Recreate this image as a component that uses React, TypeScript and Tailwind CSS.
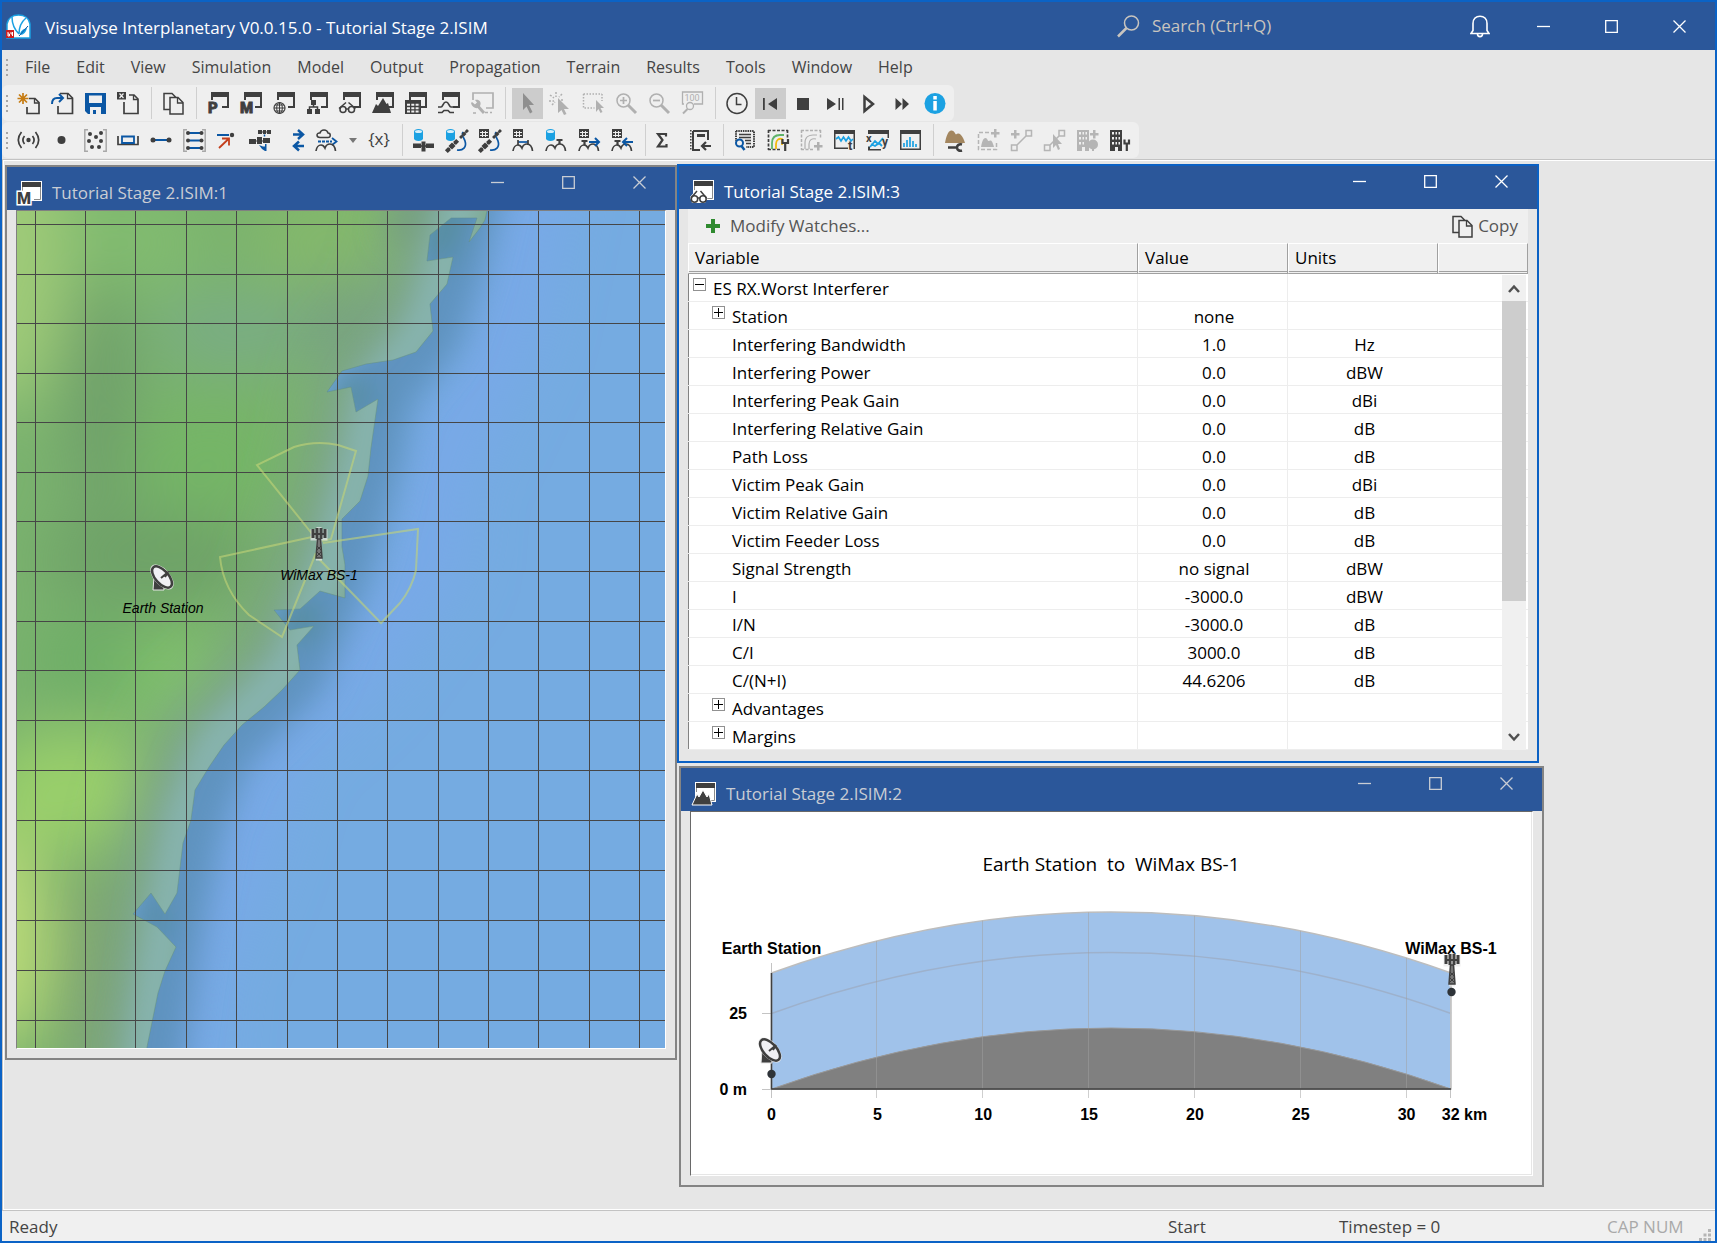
import React from 'react';

type IconProps = { children: React.ReactNode; className?: string };

// every toolbar glyph is drawn on the same 23px canvas
function Icon({ children, className = "text-[#3f3f3f]" }: IconProps) {
    return (
        <svg
            width="23"
            height="23"
            viewBox="0 0 23 23"
            fill="none"
            stroke="none"
            aria-hidden="true"
            className={"shrink-0 overflow-visible " + className}
        >
            {children}
        </svg>
    );
}

const BLUE = "#0b57a4";
const CYAN = "#1ba1e2";

const WinFrame = () => <path fill="currentColor" d="M4 0h18v16h-7v-2h5V5h-14v3H4z" />;
const Disk = ({ x = 0, y = 0 }) => (
    <g transform={`translate(${x} ${y})`}>
        <path fill={CYAN} d="M0 2.500C0 1 2 0 4.500 0S9 1 9 2.500v7C9 11 7 12 4.500 12S0 11 0 9.500z" />
        <ellipse cx="4.500" cy="2.500" rx="3.500" ry="1.500" fill="#d6effb" />
    </g>
);
const MiniGrid = ({ x = 0, y = 0 }) => (
    <g transform={`translate(${x} ${y})`}>
        <path fill="currentColor" d="M0 0h10v9H0z" />
        <path stroke="#efefef" d="M1 3.500h8M1 6.500h8M3.500 2v6M6.500 2v6" />
    </g>
);
const Hills = () => <path stroke="currentColor" strokeWidth="1.700" d="M1 22c.5-4 3-6 5-6 2 0 3 1 4 3 1-3 3-4 5-4 3 0 5 3 5.500 7" />;
const SmallSat = ({ x = 0, y = 0, s = 1 }) => (
    <g transform={`translate(${x} ${y}) rotate(-45) scale(${s})`}>
        <path fill="currentColor" d="M-8-2h4.500v4h-4.500zM-2.500-2.500h5v5h-5zM3.500-2h4.500v4h-4.500z" />
        <path stroke="currentColor" d="M-7 0h14" />
    </g>
);
const Orbit = () => (
    <>
        <path stroke={BLUE} strokeWidth="1.700" d="M17 3c-2 3 1 6 2 9 2 6-2 10-8 9" />
        <SmallSat x={18} y={5} s={0.7} />
        <SmallSat x={6} y={17} />
    </>
);
const Plus = ({ x = 0, y = 0 }) => <path fill="currentColor" d={`M${x + 3} ${y}h2.500v3h3v2.500h-3v3h-2.500v-3h-3v-2.500h3z`} />;

const icons: Record<string, React.ReactNode> = {
    newFile: (
        <Icon>
            <path stroke="currentColor" strokeWidth="1.700" d="M11 6.500h6l4 4V21.500H9V15" />
            <path stroke="currentColor" strokeWidth="1.300" d="M16.500 7v4H21" />
            <path stroke="#c67c13" strokeWidth="1.700" d="M5 1v11M-.5 6.500h11M1 2.500l8 8M9 2.500l-8 8" />
        </Icon>
    ),
    open: (
        <Icon>
            <path stroke="currentColor" strokeWidth="1.700" d="M9 1.500h8l4.500 4.500v15.500H7V14" />
            <path stroke="currentColor" strokeWidth="1.300" d="M16.500 1.500v5h5" />
            <path stroke={BLUE} strokeWidth="2" d="M1 12c0-4 2-6 5-6h5M8 2l4 4-4 4" />
        </Icon>
    ),
    save: (
        <Icon>
            <path fill={BLUE} fillRule="evenodd" d="M1 1h21v21H4l-3-3zM5 3.500v7.500h13V3.500zM6 15v7h3v-4h3v4h5v-7z" />
        </Icon>
    ),
    closeFile: (
        <Icon>
            <path stroke="currentColor" strokeWidth="1.700" d="M12 3h5l4 4v14.500H7V10" />
            <path stroke="currentColor" strokeWidth="1.300" d="M16.500 3v4.500H21" />
            <path fill="currentColor" d="M0 0h9v7.500H0z" />
            <path stroke="#efefef" strokeWidth="1.200" d="M2.500 1.500l4 4.500M6.500 1.500l-4 4.500" />
        </Icon>
    ),
    copy: (
        <Icon>
            <path stroke="currentColor" strokeWidth="1.500" d="M8 17.500H2V1.500h8l4 4M8 5.500h8l5 5V22H8z" />
            <path stroke="currentColor" strokeWidth="1.300" d="M15.500 6v5H21" />
        </Icon>
    ),
    plot: (
        <Icon>
            <WinFrame />
            <text x="1" y="21" fontSize="15" fontWeight="900" fontFamily="Roboto, sans-serif" fill="currentColor" stroke="currentColor" strokeWidth=".8">P</text>
        </Icon>
    ),
    map: (
        <Icon>
            <WinFrame />
            <text x="0" y="21" fontSize="15" fontWeight="900" fontFamily="Roboto, sans-serif" fill="currentColor" stroke="currentColor" strokeWidth=".8">M</text>
        </Icon>
    ),
    globe: (
        <Icon>
            <WinFrame />
            <circle cx="6.500" cy="16" r="5.500" stroke="currentColor" strokeWidth="1.200" fill="#efefef" />
            <path stroke="currentColor" d="M1 16h11M6.500 10.500v11M2 13h9M2 19h9" />
            <ellipse cx="6.500" cy="16" rx="2.800" ry="5.500" stroke="currentColor" />
        </Icon>
    ),
    tree: (
        <Icon>
            <WinFrame />
            <path fill="currentColor" d="M5 8h5v5H5zM1 17h5v5H1zM9 17h5v5H9z" />
            <path stroke="currentColor" strokeWidth="1.500" d="M7.500 12v3M3.500 18v-3h8v3" />
        </Icon>
    ),
    watch: (
        <Icon>
            <WinFrame />
            <circle cx="4" cy="17.500" r="3" stroke="currentColor" strokeWidth="1.500" />
            <circle cx="12.500" cy="17.500" r="3" stroke="currentColor" strokeWidth="1.500" />
            <path stroke="currentColor" strokeWidth="1.500" d="M7 17h2.500M0 16.500l7-6M16.500 16.500l-7-6" />
        </Icon>
    ),
    terrainView: (
        <Icon>
            <WinFrame />
            <path fill="currentColor" d="M0 21l4-9 2 2 5-8 3.500 6 1.500-1 3 10z" />
        </Icon>
    ),
    table: (
        <Icon>
            <WinFrame />
            <path fill="currentColor" d="M0 8h16v14H0z" />
            <path stroke="#efefef" strokeWidth="2" d="M2 12.800h13M2 16.200h13M2 19.600h13" strokeDasharray="3 1.300" />
        </Icon>
    ),
    graph: (
        <Icon>
            <WinFrame />
            <path stroke="currentColor" strokeWidth="1.700" d="M0 15h3c2 0 2-5 5-5s3 5 5 5h2M0 20.500h4l2-2h4l2 2h4" />
        </Icon>
    ),
    configure: (
        <Icon className="text-[#b0b0b0]">
            <path stroke="currentColor" strokeWidth="1.700" d="M2 8V1h20v15h-7M14 20.500h3M19 20.500h2M2 21h3" />
            <path stroke="currentColor" strokeWidth="3" d="M5 12l8 9" />
            <path fill="currentColor" d="M0 11l1-1 3 2.500 2-2L4 8c4-1 7 2 5 6s-8 2-9-3z" />
        </Icon>
    ),
    cursor: (
        <Icon className="text-[#8f8f8f]">
            <path fill="currentColor" d="M7 1l11 12h-5l3.500 7-2.500 1.500-3.500-7L7 18z" />
        </Icon>
    ),
    cursorClick: (
        <Icon className="text-[#b0b0b0]">
            <path fill="currentColor" d="M9 6l11 11h-5l2.500 5-2.500 1-2.500-5L9 21z" />
            <path stroke="currentColor" strokeWidth="1.500" strokeDasharray="2 1.500" d="M7 0v5M1 3l4 3M13 2l-3 3M0 9h5M12 8h3M3 13l3-3" />
        </Icon>
    ),
    cursorBox: (
        <Icon className="text-[#b0b0b0]">
            <path stroke="currentColor" strokeWidth="1.500" strokeDasharray="1.500 1.500" d="M1.500 2h18.500M1.500 2v14h11M20 2v7" />
            <path fill="currentColor" d="M14 8l8 8h-3.500l2 4-2 1-2-4-2.500 3z" />
        </Icon>
    ),
    zoomIn: (
        <Icon className="text-[#b0b0b0]">
            <circle cx="8.500" cy="8.500" r="6.500" stroke="currentColor" strokeWidth="1.500" />
            <path stroke="currentColor" strokeWidth="1.700" d="M8.500 5v7M5 8.500h7" />
            <path stroke="currentColor" strokeWidth="3" d="M13 13l8 8" />
        </Icon>
    ),
    zoomOut: (
        <Icon className="text-[#b0b0b0]">
            <circle cx="8.500" cy="8.500" r="6.500" stroke="currentColor" strokeWidth="1.500" />
            <path stroke="currentColor" strokeWidth="1.700" d="M5 8.500h7" />
            <path stroke="currentColor" strokeWidth="3" d="M13 13l8 8" />
        </Icon>
    ),
    zoomScale: (
        <Icon className="text-[#b0b0b0]">
            <path stroke="currentColor" strokeWidth="1.300" d="M3 12H1.500V0h20v12H13" />
            <text x="3.500" y="9" fontSize="9" fontFamily="Roboto, sans-serif" fill="currentColor">100</text>
            <circle cx="9" cy="14" r="3.500" stroke="currentColor" strokeWidth="1.300" />
            <path stroke="currentColor" strokeWidth="2" d="M6.500 17L2 21.500" />
        </Icon>
    ),
    clock: (
        <Icon>
            <circle cx="11" cy="11.500" r="10" stroke="currentColor" strokeWidth="1.500" />
            <path stroke="currentColor" strokeWidth="1.500" d="M10.500 5v7.500h5" />
        </Icon>
    ),
    rewind: (
        <Icon>
            <path fill="currentColor" d="M4 6h1.800v12H4zM18 6v12l-9-6z" />
        </Icon>
    ),
    stop: (
        <Icon>
            <path fill="currentColor" d="M5 6h12v12H5z" />
        </Icon>
    ),
    step: (
        <Icon>
            <path fill="currentColor" d="M2 6l9 6-9 6zM13.500 6H15v12h-1.500zM17 6h1.500v12H17z" />
        </Icon>
    ),
    play: (
        <Icon>
            <path stroke="currentColor" strokeWidth="2.500" d="M6.500 5l8.500 7-8.500 7z" />
        </Icon>
    ),
    fast: (
        <Icon>
            <path fill="currentColor" d="M4.500 6l6.500 6-6.500 6zM11.500 6l6.500 6-6.500 6z" />
        </Icon>
    ),
    info: (
        <Icon>
            <circle cx="11" cy="11.500" r="10.500" fill={CYAN} />
            <path fill="#fff" d="M9.300 9h3.500v9.500H9.300zM9.300 4h3.500v3.500H9.300z" />
        </Icon>
    ),
    antenna: (
        <Icon>
            <circle cx="10.500" cy="11" r="2.200" fill="currentColor" />
            <path stroke="currentColor" strokeWidth="1.700" d="M6.500 7c-2 2.500-2 5.500 0 8M14.500 7c2 2.500 2 5.500 0 8M3.500 3c-4 5-4 11 0 16M17.500 3c4 5 4 11 0 16" />
        </Icon>
    ),
    dot: (
        <Icon>
            <circle cx="10.500" cy="11" r="4" fill="currentColor" />
        </Icon>
    ),
    group: (
        <Icon>
            <path stroke="#a8a8a8" strokeWidth="1.500" d="M4 .8H.8v21.400H4M19 .8h3.200v21.400H19" />
            <g fill="currentColor">
                <circle cx="6" cy="5" r="2" /><circle cx="17" cy="4" r="2" /><circle cx="12" cy="8" r="2" />
                <circle cx="5" cy="12" r="2" /><circle cx="17" cy="12" r="2" /><circle cx="8" cy="18" r="2" /><circle cx="15" cy="18" r="2" />
            </g>
        </Icon>
    ),
    carrier: (
        <Icon>
            <path stroke="currentColor" strokeWidth="1.700" d="M1 7v8.500h20V7" />
            <path stroke={BLUE} strokeWidth="1.800" fill="#efefef" d="M5 7.500h12V14H5z" />
        </Icon>
    ),
    link: (
        <Icon>
            <path stroke={BLUE} strokeWidth="2" d="M3 11h16" />
            <circle cx="3" cy="11" r="2.500" fill="currentColor" /><circle cx="19" cy="11" r="2.500" fill="currentColor" />
        </Icon>
    ),
    linkGroup: (
        <Icon>
            <path stroke="#a8a8a8" strokeWidth="1.500" d="M4 .8H.8v21.400H4M19 .8h3.200v21.400H19" />
            <path stroke={BLUE} strokeWidth="2" d="M5 4h14M5 11.500h14M5 19h14" />
            <g fill="currentColor">
                <circle cx="5" cy="4" r="2" /><circle cx="18.500" cy="4" r="2" /><circle cx="5" cy="11.500" r="2" />
                <circle cx="18.500" cy="11.500" r="2" /><circle cx="5" cy="19" r="2" /><circle cx="18.500" cy="19" r="2" />
            </g>
        </Icon>
    ),
    interference: (
        <Icon>
            <path stroke={BLUE} strokeWidth="2" d="M1 6h12" />
            <circle cx="16" cy="6" r="2.200" fill="currentColor" />
            <path stroke="#c43e1c" strokeWidth="1.800" d="M3 19L13 9.500M6 9.500h7v7" />
        </Icon>
    ),
    satellites: (
        <Icon>
            <path fill="currentColor" d="M0 10h7v5H0zM8 8h5v7H8zM14 9h7v5h-7zM9 1h4v4H9zM14 1h3v4h-3zM18 1h4v4h-4z" />
            <path stroke="currentColor" d="M1 12h20M10 3h12" />
            <path stroke={BLUE} strokeWidth="1.500" d="M15.500 5.500v2" />
            <path fill={BLUE} d="M10 16l4 1.500h2V15h1.500v7H16l-3-2z" />
        </Icon>
    ),
    swap: (
        <Icon>
            <path stroke={BLUE} strokeWidth="2.500" d="M11 5.500h9M16 1l5 4.500-5 4.500M22 17h-9M17 12.500l-5 4.500 5 4.500" />
        </Icon>
    ),
    propagationEnv: (
        <Icon>
            <path stroke="currentColor" strokeWidth="1.500" d="M5 8.500c-4 0-4-5 0-4.500 1-4 7-4 8 0 3 0 3 4.500 0 4.500z" />
            <path stroke={BLUE} strokeWidth="2" strokeDasharray="3 1" d="M3 12.500h14" />
            <path stroke={BLUE} strokeWidth="1.800" d="M17 9l4.500 3.500L17 16" />
            <Hills />
        </Icon>
    ),
    variable: (
        <Icon>
            <text x="11" y="16" textAnchor="middle" fontSize="17" fontFamily="Open Sans, sans-serif" fill="currentColor">{"{x}"}</text>
        </Icon>
    ),
    diskSat: (
        <Icon>
            <Disk x={1} />
            <path fill="currentColor" d="M0 14.500h8v4.500H0zM13 14.500h8v4.500h-8zM8.500 12.500h4v10h-4z" />
            <path stroke="currentColor" strokeWidth="1.700" d="M1 17h20" />
        </Icon>
    ),
    diskOrbit: (
        <Icon>
            <Disk /><Orbit />
        </Icon>
    ),
    gridOrbit: (
        <Icon>
            <MiniGrid /><Orbit />
        </Icon>
    ),
    gridHills: (
        <Icon>
            <MiniGrid x={1} /><Hills />
            <path stroke={BLUE} strokeWidth="1.700" d="M6 13h10" />
            <path stroke="currentColor" strokeWidth="1.700" d="M6 11v5M16 11v5" />
        </Icon>
    ),
    diskHills: (
        <Icon>
            <Disk x={1} /><Hills />
            <path stroke="currentColor" strokeWidth="2.200" d="M11.500 11h6M14.500 11v4" />
        </Icon>
    ),
    gridOut: (
        <Icon>
            <MiniGrid x={1} /><Hills />
            <path stroke="currentColor" strokeWidth="2.200" d="M3.500 12h6M6.500 12v4" />
            <path stroke={BLUE} strokeWidth="2" d="M11 13h10M17 9l4 4-4 4" />
        </Icon>
    ),
    gridIn: (
        <Icon>
            <MiniGrid x={1} /><Hills />
            <path stroke="currentColor" strokeWidth="2.200" d="M3.500 12h6M6.500 12v4" />
            <path stroke={BLUE} strokeWidth="2" d="M12 13h10M16 9l-4 4 4 4" />
        </Icon>
    ),
    sum: (
        <Icon>
            <path stroke="currentColor" strokeWidth="2.200" d="M10 7.500V5H2l4.500 6L2 17.500h8.500V15" />
        </Icon>
    ),
    journal: (
        <Icon>
            <path stroke="currentColor" strokeWidth="2" d="M4 2h15v9M4 2v19h7" />
            <path stroke="currentColor" strokeWidth="1.500" strokeDasharray="1.500 1.500" d="M1.800 1v20" />
            <path fill="currentColor" d="M8 5h8v3H8z" />
            <path stroke="currentColor" strokeWidth="2.200" d="M13 17h9M17 13l-4 4 4 4" />
        </Icon>
    ),
    report: (
        <Icon>
            <path stroke="currentColor" strokeWidth="2" strokeDasharray="1.500 .8" d="M2 2h18v16h-8M2 2v10" />
            <path stroke="currentColor" strokeWidth="1.500" d="M5 5.500h12M5 8.500h12M11 11.500h6M12 14.500h5" />
            <circle cx="5.500" cy="14" r="3.500" stroke={BLUE} strokeWidth="2" />
            <path stroke={BLUE} strokeWidth="2.500" d="M7.500 17l3 4" />
        </Icon>
    ),
    contour: (
        <Icon>
            <path stroke="currentColor" strokeWidth="1.700" strokeDasharray="3 1.500" d="M1 1.500h20M1.500 1v20M1 20.500h12M20.500 1v8" />
            <path stroke="#5fb36b" strokeWidth="1.800" d="M5 20V14c0-6 4-8 8-8h4" />
            <path stroke="#f2b90f" strokeWidth="1.800" d="M9 20v-5c0-4 3-6 6-5v6" />
            <path stroke="currentColor" strokeWidth="2.200" d="M15.500 10v4h5.500v-4M18.200 13v9" />
        </Icon>
    ),
    contourAdd: (
        <Icon className="text-[#b0b0b0]">
            <path stroke="currentColor" strokeWidth="1.500" strokeDasharray="3 1.500" d="M1 1.500h20M1.500 1v20M1 20.500h12M20.500 1v8" />
            <path stroke="currentColor" strokeWidth="1.200" d="M5 20V14c0-6 4-8 8-8h4M9 20v-5c0-4 3-6 7-5" />
            <Plus x={14} y={13} />
        </Icon>
    ),
    timeGraph: (
        <Icon>
            <path fill="currentColor" fillRule="evenodd" d="M1 1h21v19h-1.500V5h-18v13.500H15V20H1z" />
            <path stroke={CYAN} strokeWidth="1.700" d="M3 10l2.500-2 2.500 4 2.500-4 2.500 4 2.500-4 2.500 4 2-2" />
            <text x="15" y="21" fontSize="13" fontWeight="700" fontFamily="Roboto, sans-serif" fill="currentColor">t</text>
        </Icon>
    ),
    xyGraph: (
        <Icon>
            <path fill="currentColor" d="M2 1h21v8h-1.500V5H2zM2 17.500h2V20h11v1.500H2z" />
            <path stroke={CYAN} strokeWidth="1.800" d="M4 18l5-6 3 3 5-6M5 15l4 2 4-3 3 3" />
            <text x="0" y="13" fontSize="11" fontWeight="700" fontFamily="Roboto, sans-serif" fill="currentColor">x</text>
            <text x="16" y="17" fontSize="12" fontWeight="700" fontFamily="Roboto, sans-serif" fill="currentColor">y</text>
        </Icon>
    ),
    histogram: (
        <Icon>
            <path fill="currentColor" fillRule="evenodd" d="M1 1h21v20H1zM2.500 5v14.500h18V5z" />
            <path stroke={CYAN} strokeWidth="1.700" d="M5 18v-4M8 18v-7M11 18V8M14 18v-6M17 18v-3" />
        </Icon>
    ),
    terrainTool: (
        <Icon>
            <path fill="#a3865f" d="M1 14C2 8 4 2 7 1.500c3-.5 4 3 5 4 1-1 3-1.500 4.500 0 2 2 4 6 4.500 8.500z" />
            <path stroke="currentColor" strokeWidth="2.500" d="M4 18.500h9M18 15.500c-3-1-5 1-5 3s2 4 5 3" />
        </Icon>
    ),
    terrainAdd: (
        <Icon className="text-[#b5b5b5]">
            <path stroke="currentColor" strokeWidth="1.500" strokeDasharray="4 2" d="M12 3.500H1.500v17h18V12" />
            <path fill="currentColor" d="M4 18c1-5 2-9 4.500-9 2 0 2 3 3 3s2-1 3 0 2 4 2.500 6z" />
            <Plus x={14} y={0} />
        </Icon>
    ),
    pathAdd: (
        <Icon className="text-[#b5b5b5]">
            <Plus x={1} y={1} />
            <path stroke="currentColor" strokeWidth="1.500" d="M16 1.500h5.500V7H16zM1.500 16H7v5.500H1.500zM7 16l9-9" />
        </Icon>
    ),
    pathSelect: (
        <Icon className="text-[#b5b5b5]">
            <path stroke="currentColor" strokeWidth="1.500" d="M16 1.500h5.500V7H16zM1.500 16H7v5.500H1.500zM7 16l9-9" />
            <path fill="currentColor" d="M10 5l9 10h-4l2 5-2 1-2-5-3 3z" />
        </Icon>
    ),
    buildingAdd: (
        <Icon className="text-[#b5b5b5]">
            <path fill="currentColor" fillRule="evenodd" d="M1 1h12v21H9v-4H6v4H1zM3 3v2.500h2V3zM6.500 3v2.500h1.500V3zM9.500 3v2.500H11V3zM3 8v2.500h2V8zM6.500 8v2.500h1.500V8zM9.500 8v2.500H11V8zM3 13v2.500h2V13zM6.500 13v2.500h1.500V13z" />
            <Plus x={14} y={1} />
            <circle cx="17" cy="15.500" r="5" fill="currentColor" /><path fill="currentColor" d="M16 18h2v4h-2z" />
        </Icon>
    ),
    buildingTool: (
        <Icon>
            <path fill="currentColor" fillRule="evenodd" d="M1 1h12v21H9v-4H6v4H1zM3 3v2.500h2V3zM6.500 3v2.500h1.500V3zM9.500 3v2.500H11V3zM3 8v2.500h2V8zM6.500 8v2.500h1.500V8zM9.500 8v2.500H11V8zM3 13v2.500h2V13zM6.500 13v2.500h1.500V13zM9.500 13v2.500H11V13z" />
            <path stroke="currentColor" strokeWidth="2.200" d="M15.500 10.500v4H20v-4M17.800 14v8" />
        </Icon>
    ),
};

// "|" is a separator, "v" the drop-down arrow
const mainTools = [
    "newFile", "open", "save", "closeFile", "|", "copy", "|",
    "plot", "map", "globe", "tree", "watch", "terrainView", "table", "graph", "configure", "|",
    "cursor", "cursorClick", "cursorBox", "zoomIn", "zoomOut", "zoomScale", "|",
    "clock", "rewind", "stop", "step", "play", "fast", "info",
];
const modelTools = [
    "antenna", "dot", "group", "carrier", "link", "linkGroup", "interference", "satellites", "swap", "propagationEnv", "v", "variable", "|",
    "diskSat", "diskOrbit", "gridOrbit", "gridHills", "diskHills", "gridOut", "gridIn", "|",
    "sum", "journal", "|",
    "report", "contour", "contourAdd", "timeGraph", "xyGraph", "histogram", "|",
    "terrainTool", "terrainAdd", "pathAdd", "pathSelect", "buildingAdd", "buildingTool",
];
const pressed = ["cursor", "rewind"];

const menus = ["File", "Edit", "View", "Simulation", "Model", "Output", "Propagation", "Terrain", "Results", "Tools", "Window", "Help"];

function Grip() {
    return (
        <svg width="3" height="17" viewBox="0 0 3 17" aria-hidden="true" className="shrink-0">
            <path stroke="#a6a6a6" strokeWidth="2" strokeDasharray="2 3" d="M1 0v17" />
        </svg>
    );
}

function Toolbar({ label, tools }: { label: string; tools: string[] }) {
    return (
        <div role="toolbar" aria-label={label} className="flex items-center self-start h-9 gap-0.5 pl-1 pr-[3px] rounded-md bg-[#efefef]">
            <div className="w-1.5"><Grip /></div>
            {tools.map((tool, i) => {
                if (tool === "|") return <div key={i} className="flex justify-center w-2.5 h-8"><div className="w-px bg-[#cfcfcf]"></div></div>;
                if (tool === "v") return (
                    <button key={i} aria-label="more" className="flex items-center justify-center w-[18px] h-[31px]">
                        <svg width="8" height="5" viewBox="0 0 8 5" aria-hidden="true"><path fill="#777" d="M0 0h8L4 5z" /></svg>
                    </button>
                );
                return (
                    <button
                        key={i}
                        aria-label={tool}
                        className={"flex items-center justify-center w-[31px] h-[31px] " + (pressed.includes(tool) ? "bg-[#cccccc]" : "")}
                    >
                        {icons[tool]}
                    </button>
                );
            })}
        </div>
    );
}

function CaptionIcon({ kind }: { kind: "min" | "max" | "close" }) {
    return (
        <svg width="13" height="13" viewBox="0 0 13 13" fill="none" stroke="currentColor" strokeWidth="1.300" aria-hidden="true">
            {kind === "min" && <path d="M0 6.500h13" />}
            {kind === "max" && <path d="M.7.7h11.600v11.600H.7z" />}
            {kind === "close" && <path d="M.5.5l12 12M12.500.5l-12 12" />}
        </svg>
    );
}

type WindowProps = { title: string; icon: React.ReactNode; active?: boolean; className: string; children: React.ReactNode };

function ChildWindow({ title, icon, active, className, children }: WindowProps) {
    return (
        <section className={"absolute flex flex-col border-2 bg-[#e6e6e6] " + (active ? "border-[#0b61c4] " : "border-[#848484] ") + className}>
            <header className={"flex justify-between h-[43px] shrink-0 bg-[#2b579a] " + (active ? "text-white" : "text-[#c9cdd4]")}>
                <div className="flex items-center gap-2.5 pl-[11px] pt-2">
                    {icon}
                    <h2 className="text-[17px]">{title}</h2>
                </div>
                <div className="flex h-[30px]">
                    <button aria-label="Minimize" className="flex items-center justify-center w-[71px]"><CaptionIcon kind="min" /></button>
                    <button aria-label="Maximize" className="flex items-center justify-center w-[71px]"><CaptionIcon kind="max" /></button>
                    <button aria-label="Close" className="flex items-center justify-center w-[71px]"><CaptionIcon kind="close" /></button>
                </div>
            </header>
            {children}
        </section>
    );
}

// window glyph of the blue captions, with its white halo
function TitleGlyph({ children }: { children: React.ReactNode }) {
    return (
        <svg width="24" height="24" viewBox="0 0 24 24" fill="none" aria-hidden="true" className="shrink-0 overflow-visible text-[#3f3f3f]">
            <path fill="#fff" d="M3 0h21v20H3z" />
            <path fill="currentColor" d="M4 1h19v5H4z" />
            <path stroke="#8a8a8a" d="M22.500 6v12.500H16M4.500 6v4" />
            {children}
        </svg>
    );
}

function Dish({ x, y }: { x: number; y: number }) {
    return (
        <g transform={`translate(${x} ${y})`}>
            <path fill="#3f3f3f" stroke="#e8e8e8" d="M-8 0h9l1 13h-11z" />
            <ellipse rx="15" ry="8" transform="rotate(48)" fill="#e8e8e8" />
            <ellipse rx="13" ry="6.500" transform="rotate(48)" fill="#f0f0f4" stroke="#3f3f3f" strokeWidth="2.500" />
            <path stroke="#3f3f3f" strokeWidth="2" d="M-1 1l6-5M3 0l3-5" />
        </g>
    );
}

function Mast({ x, y }: { x: number; y: number }) {
    return (
        <g transform={`translate(${x} ${y})`}>
            <path fill="none" stroke="#e8e8e8" strokeWidth="5" d="M0-17V14M-6-15v9h12v-9M-3 14h6" opacity=".7" />
            <path fill="none" stroke="#3f3f3f" strokeWidth="3" d="M-6-15v9M-2-16V-5M2-16V-5M6-15v9" />
            <path stroke="#3f3f3f" strokeWidth="2" d="M-6-10H6" />
            <path fill="#777" stroke="#3f3f3f" strokeWidth="1.500" d="M-1.500-5h3L3 14h-6z" />
            <path stroke="#3f3f3f" d="M-2 2l4 4M2 2l-4 4M-3 13l5-5M3 13l-5-5" />
        </g>
    );
}

const coast =
    "M487 205L487 211 485 220 480 228 469 242 477 218 451 218 430 235 427 261 453 257 447 284 430 304 433 331 416 352 393 360 366 364 342 371 327 392 351 387 356 412 378 399 371 448 368 476 360 501 342 519 342 547 345 565 345 598 320 591 300 609 274 610 290 630 314 626 297 645 300 670 282 690 264 707 242 725 224 745 209 767 195 790 191 820 183 843 177 893 165 914 151 893 133 914 157 927 176 947 165 971 158 993 147 1047 146 1060";
// coastline without its inlets, for the shading on both sides
const shore = "M475 150L450 250 425 330 375 390 365 450 335 560 290 670 215 745 185 820 170 900 160 960 140 1100";

const meridians = [35, 85, 135, 186, 236, 287, 337, 387, 438, 488, 538, 589, 639];
const parallels = [224, 274, 323, 373, 422, 472, 521, 571, 621, 670, 720, 770, 820, 870, 920, 970, 1020];

function MapView() {
    return (
        <svg viewBox="17 211 648 837" preserveAspectRatio="none" className="block w-full h-full" role="img" aria-label="Map">
            <defs>
                <filter id="soft" filterUnits="userSpaceOnUse" x="-100" y="100" width="900" height="1100"><feGaussianBlur stdDeviation="16" /></filter>
                <filter id="wide" filterUnits="userSpaceOnUse" x="-100" y="100" width="900" height="1100"><feGaussianBlur stdDeviation="30" /></filter>
                <clipPath id="land"><path d={coast + "L0 1060 0 205z"} /></clipPath>
            </defs>
            <rect x="0" y="200" width="700" height="870" fill="#75abe1" />
            <g fill="none" filter="url(#wide)">
                <path d="M540 150L505 330 435 480 430 560 350 670 270 740 235 860 190 970 180 1100" stroke="#79a8ea" strokeWidth="50" />
            </g>
            <g fill="none" filter="url(#soft)">
                <path d={shore} stroke="#5f93bf" strokeWidth="76" />
                <path d="M455 200L430 260M330 390L370 400M275 620L320 620M140 915L165 920" stroke="#548c98" strokeWidth="34" />
            </g>
            <g clipPath="url(#land)">
                <rect x="0" y="200" width="700" height="870" fill="#7ab26e" />
                <g filter="url(#wide)">
                    <ellipse cx="0" cy="250" rx="70" ry="160" fill="#9fca78" />
                    <ellipse cx="130" cy="240" rx="70" ry="60" fill="#81bb70" />
                    <ellipse cx="330" cy="240" rx="80" ry="60" fill="#83b86c" />
                    <ellipse cx="100" cy="400" rx="28" ry="130" fill="#6d9c69" />
                    <ellipse cx="235" cy="330" rx="80" ry="34" fill="#79ac86" />
                    <ellipse cx="345" cy="320" rx="40" ry="40" fill="#769f80" />
                    <ellipse cx="210" cy="460" rx="80" ry="60" fill="#75b566" />
                    <ellipse cx="150" cy="560" rx="110" ry="50" fill="#6ea267" />
                    <ellipse cx="90" cy="660" rx="60" ry="40" fill="#6dae66" />
                    <ellipse cx="180" cy="680" rx="50" ry="50" fill="#80c26a" />
                    <ellipse cx="70" cy="790" rx="90" ry="60" fill="#99cf6a" />
                    <ellipse cx="0" cy="940" rx="50" ry="110" fill="#bada78" />
                    <ellipse cx="95" cy="980" rx="24" ry="130" fill="#7fa06a" />
                </g>
                <g fill="none" filter="url(#wide)">
                    <path d={shore} stroke="#7ba28a" strokeWidth="100" />
                </g>
                <g fill="none" filter="url(#soft)">
                    <path d={shore} stroke="#88b6b4" strokeWidth="40" />
                    <path d="M430 190L400 240" stroke="#769f80" strokeWidth="36" />
                </g>
            </g>
            <path d={coast} fill="none" stroke="#5c8a94" strokeOpacity=".5" />
            <g fill="none" stroke="#464646" shapeRendering="crispEdges">
                {meridians.map((x) => <path key={x} d={`M${x + 0.5} 200v870`} />)}
                {parallels.map((y) => <path key={y} d={`M0 ${y + 0.5}h700`} />)}
            </g>
            <g fill="none" stroke="#c3d477" strokeWidth="2" strokeOpacity=".6">
                <path d="M313 535L257 465 294 447Q316 440 338 445L356 451 331 539 322 541" />
                <path d="M323 543L418 529 416 570Q412 588 400 603L381 623 319 559" />
                <path d="M312 537L220 557Q223 590 249 615L282 637 316 553" />
            </g>
            <Dish x={162} y={577} />
            <Mast x={319} y={544} />
            <g fontSize="14" fontStyle="italic" fontFamily="Liberation Sans, Arial, sans-serif" textAnchor="middle">
                <text x="163" y="613">Earth Station</text>
                <text x="319" y="580">WiMax BS-1</text>
            </g>
        </svg>
    );
}

const rows: { name: string; value?: string; units?: string; toggle?: string; top?: boolean }[] = [
    { name: "ES RX.Worst Interferer", toggle: "-", top: true },
    { name: "Station", value: "none", toggle: "+" },
    { name: "Interfering Bandwidth", value: "1.0", units: "Hz" },
    { name: "Interfering Power", value: "0.0", units: "dBW" },
    { name: "Interfering Peak Gain", value: "0.0", units: "dBi" },
    { name: "Interfering Relative Gain", value: "0.0", units: "dB" },
    { name: "Path Loss", value: "0.0", units: "dB" },
    { name: "Victim Peak Gain", value: "0.0", units: "dBi" },
    { name: "Victim Relative Gain", value: "0.0", units: "dB" },
    { name: "Victim Feeder Loss", value: "0.0", units: "dB" },
    { name: "Signal Strength", value: "no signal", units: "dBW" },
    { name: "I", value: "-3000.0", units: "dBW" },
    { name: "I/N", value: "-3000.0", units: "dB" },
    { name: "C/I", value: "3000.0", units: "dB" },
    { name: "C/(N+I)", value: "44.6206", units: "dB" },
    { name: "Advantages", toggle: "+" },
    { name: "Margins", toggle: "+" },
];

function WatchTable() {
    return (
        <div className="relative">
            <table className="w-full table-fixed border-separate border-spacing-0 text-black">
                <thead>
                    <tr className="*:h-[31px] *:bg-[#f0f0f0] *:border-t *:border-l *:border-t-white *:border-l-white *:border-r *:border-r-[#a0a0a0] *:border-b-[3px] *:border-b-[#a0a0a0] *:[border-bottom-style:double] *:p-0 *:pl-1.5 *:text-left *:font-normal">
                        <th className="w-[450px]">Variable</th>
                        <th className="w-[150px]">Value</th>
                        <th className="w-[150px]">Units</th>
                        <th></th>
                    </tr>
                </thead>
                <tbody className="bg-white">
                    {rows.map((row) => (
                        <tr key={row.name} className="*:h-7 *:border-b *:border-[#ededed] *:p-0">
                            <td className="border-r">
                                <div className={"flex h-[27px] gap-[7px] border-l border-[#828282] " + (row.top ? "pl-1" : "pl-[23px]")}>
                                    {row.toggle ? (
                                        <button aria-label={"Toggle " + row.name} className="flex items-center justify-center w-[13px] h-[13px] mt-1 border border-[#919191]">
                                            <svg width="9" height="9" viewBox="0 0 9 9" stroke="#000" aria-hidden="true">
                                                <path d={row.toggle === "+" ? "M0 4.500h9M4.500 0v9" : "M0 4.500h9"} />
                                            </svg>
                                        </button>
                                    ) : <span className="w-[13px]"></span>}
                                    <span className="pt-[3px]">{row.name}</span>
                                </div>
                            </td>
                            <td className="border-r text-center"><div className="pt-0.5 pl-[3px]">{row.value}</div></td>
                            <td className="text-center"><div className="pt-0.5 pl-[3px]">{row.units}</div></td>
                            <td></td>
                        </tr>
                    ))}
                </tbody>
            </table>
            <div className="absolute right-0.5 top-8 bottom-0 flex flex-col w-6 bg-[#f0f0f0]">
                <button aria-label="Scroll up" className="flex items-center justify-center h-[26px]">
                    <svg width="12" height="9" viewBox="0 0 12 9" fill="none" stroke="#505050" strokeWidth="2.500" aria-hidden="true"><path d="M1 8l5-5.500L11 8" /></svg>
                </button>
                <div className="h-[300px] bg-[#cdcdcd]"></div>
                <div className="grow"></div>
                <button aria-label="Scroll down" className="flex items-center justify-center h-[26px]">
                    <svg width="12" height="9" viewBox="0 0 12 9" fill="none" stroke="#505050" strokeWidth="2.500" aria-hidden="true"><path d="M1 1l5 5.500L11 1" /></svg>
                </button>
            </div>
        </div>
    );
}

const kmTicks = [5, 10, 15, 20, 25, 30];
const kmToX = (km: number) => 771.5 + 21.17 * km;

function PathProfile() {
    return (
        <svg width="840" height="362" viewBox="691 812 840 362" className="block bg-white" role="img" aria-label="Path profile">
            <path fill="#a0c2ea" stroke="#bdbdbd" strokeWidth="1.500" d="M771.500 973Q1111 851 1451 973V1089H771.500z" />
            <path fill="#808080" stroke="#999" d="M771.500 1089Q1111 967 1451 1089z" />
            <path fill="none" stroke="#9db1cc" strokeWidth="1.500" d="M771.500 1013.500Q1111 891.500 1451 1013.500" />
            {kmTicks.map((km) => {
                const t = km / 32.1;
                const x = Math.round(kmToX(km)) - 0.5;
                return <path key={km} stroke="#a0a0a0" strokeOpacity=".5" d={`M${x} ${973 - 244 * t * (1 - t)}V1098`} />;
            })}
            <path stroke="#c4c4c4" d="M771.500 963V1098M1450.500 973V1098M762 1013.500h10M762 1089.500h10" />
            <path stroke="#3f3f3f" strokeWidth="1.500" d="M771.500 973V1089M771 1089H1451" fill="none" />
            <circle cx="771.500" cy="1074" r="4.200" fill="#2e3338" />
            <circle cx="1451.500" cy="992" r="4.200" fill="#2e3338" />
            <g fontSize="16" fontWeight="700" fontFamily="Liberation Sans, Arial, sans-serif" textAnchor="middle">
                <text x="771.500" y="954">Earth Station</text>
                <text x="1451" y="954">WiMax BS-1</text>
                <text x="771.500" y="1120">0</text>
                {kmTicks.map((km) => <text key={km} x={kmToX(km)} y="1120">{km}</text>)}
                <text x="1464.500" y="1120">32 km</text>
                <text x="747" y="1019" textAnchor="end">25</text>
                <text x="747" y="1095" textAnchor="end">0 m</text>
            </g>
            <text x="1111" y="871" fontSize="19" textAnchor="middle" xmlSpace="preserve" style={{ whiteSpace: "pre" }}>Earth Station  to  WiMax BS-1</text>
            <Dish x={770} y={1050} />
            <Mast x={1452} y={970} />
        </svg>
    );
}

export default function App() {
    return (
        <div className="flex flex-col w-full min-h-screen border-2 border-[#0b63c6] bg-[#e6e6e6] text-[17px] leading-6 text-[#444444] font-['Open_Sans','Segoe_UI',sans-serif]">
            <header className="flex items-center justify-between h-12 pl-1 pr-0.5 bg-[#2b579a] text-white">
                <div className="flex items-center gap-3.5">
                    <svg width="25" height="25" viewBox="0 0 25 25" aria-hidden="true" className="shrink-0">
                        <path fill="#fff" stroke={CYAN} strokeWidth="1.500" d="M1 24V10C2 4 7 1 12.500 1S23 4 24 10v14z" />
                        <path fill="none" stroke={CYAN} strokeWidth="1.500" d="M6 3c0 7 2 12 7 17M20 4c-5 4-7 9-7 16" />
                        <path fill={CYAN} d="M14 21c0-4 3-6 7-7-1 4-3 7-7 7z" />
                        <path stroke={BLUE} d="M13 22l9-10" />
                        <path fill="#cc1f1f" d="M0 16h8v8H0z" />
                        <path stroke="#fff" d="M2 18v4h1.500v-2H2M5 18v2h2M6.500 18v4" fill="none" />
                    </svg>
                    <h1 className="pt-1">Visualyse Interplanetary V0.0.15.0 - Tutorial Stage 2.ISIM</h1>
                </div>
                <div className="flex items-center h-full">
                    <label className="flex items-center gap-3 w-[334px] text-[#c9c5bf]">
                        <svg width="23" height="23" viewBox="0 0 23 23" fill="none" stroke="currentColor" aria-hidden="true" className="shrink-0">
                            <circle cx="14.500" cy="8" r="7" strokeWidth="1.500" />
                            <path strokeWidth="2.500" d="M9.500 13L1 21.500" />
                        </svg>
                        <input type="search" aria-label="Search" placeholder="Search (Ctrl+Q)" className="w-60 bg-transparent outline-none placeholder:text-[#c9c5bf]" />
                    </label>
                    <button aria-label="Notifications" className="flex items-center justify-center w-[58px] h-full">
                        <svg width="20" height="23" viewBox="0 0 20 23" fill="none" stroke="currentColor" strokeWidth="1.600" aria-hidden="true">
                            <path d="M1 18.500h18l-2-3V8.500C17 4 14 1.200 10 1.200S3 4 3 8.500v7z" /><path d="M7.500 19c0 3.500 5 3.500 5 0" />
                        </svg>
                    </button>
                    <button aria-label="Minimize" className="flex items-center justify-center w-[68px] h-full"><CaptionIcon kind="min" /></button>
                    <button aria-label="Maximize" className="flex items-center justify-center w-[68px] h-full"><CaptionIcon kind="max" /></button>
                    <button aria-label="Close" className="flex items-center justify-center w-[68px] h-full"><CaptionIcon kind="close" /></button>
                </div>
            </header>
            <nav className="flex items-center h-[35px] pl-1 text-[16px]">
                <div className="w-1.5"><Grip /></div>
                {menus.map((menu) => <button key={menu} className="px-[13px] pb-0.5">{menu}</button>)}
            </nav>
            <div className="flex flex-col gap-px pb-px">
                <Toolbar label="Main" tools={mainTools} />
                <Toolbar label="Model" tools={modelTools} />
            </div>
            <main className="flex flex-col grow border border-r-0 border-[#c3c3c3]">
                <div className="relative grow min-h-[1048px] border border-r-0 border-white">
                    <ChildWindow
                        title="Tutorial Stage 2.ISIM:1"
                        className="left-px top-1 w-[672px] h-[895px]"
                        icon={
                            <TitleGlyph>
                                <text x="-1" y="23" fontSize="16" fontWeight="900" fontFamily="Roboto, sans-serif" fill="currentColor" stroke="#fff" strokeWidth="3" paintOrder="stroke">M</text>
                            </TitleGlyph>
                        }
                    >
                        <div className="grow min-h-0 mx-[9px] mb-[9px] border border-t-[#808080] border-l-[#808080] border-b-white border-r-white">
                            <MapView />
                        </div>
                    </ChildWindow>
                    <ChildWindow
                        title="Tutorial Stage 2.ISIM:2"
                        className="left-[675px] top-[605px] w-[865px] h-[421px]"
                        icon={<TitleGlyph><path fill="currentColor" stroke="#fff" d="M0 23l5-11 2 3 4-7 4 7 2-3 3 11z" /></TitleGlyph>}
                    >
                        <div className="grow mx-[9px] mb-[9px] border border-t-[#696969] border-l-[#696969] border-b-white border-r-white">
                            <PathProfile />
                        </div>
                    </ChildWindow>
                    <ChildWindow
                        active
                        title="Tutorial Stage 2.ISIM:3"
                        className="left-[673px] top-[3px] w-[862px] h-[599px]"
                        icon={
                            <TitleGlyph>
                                <path fill="#fff" d="M0 17l6-7h6l6 7-3 6H2z" />
                                <g stroke="currentColor" strokeWidth="1.500">
                                    <circle cx="4.500" cy="19" r="3.200" /><circle cx="13" cy="19" r="3.200" />
                                    <path d="M7.500 18H10M1 18l6-7M16.500 18l-6-7" />
                                </g>
                            </TitleGlyph>
                        }
                    >
                        <div className="flex flex-col mx-[9px]">
                            <div className="flex items-center justify-between h-[34px] pl-[18px] pr-2.5 bg-[#efefef] text-[#555555]">
                                <button className="flex items-center gap-2.5">
                                    <svg width="14" height="14" viewBox="0 0 14 14" aria-hidden="true"><path fill="#2f8a2f" d="M5 0h4v5h5v4H9v5H5V9H0V5h5z" /></svg>
                                    Modify Watches...
                                </button>
                                <button className="flex items-center gap-1">{icons.copy}Copy</button>
                            </div>
                            <WatchTable />
                        </div>
                    </ChildWindow>
                </div>
            </main>
            <footer className="flex items-center h-[30px] pt-0.5 pl-[7px] pr-1 bg-[#f0f0f0]">
                <span className="grow">Ready</span>
                <span className="w-[171px]">Start</span>
                <span className="w-[268px]">Timestep = 0</span>
                <span className="w-[92px] text-[#a9a9a9]">CAP NUM</span>
                <svg width="12" height="12" viewBox="0 0 12 12" aria-hidden="true" className="self-end">
                    <path fill="#b5b5b5" d="M9 0h3v3H9zM9 4.500h3v3H9zM4.500 4.500h3v3h-3zM9 9h3v3H9zM4.500 9h3v3h-3zM0 9h3v3H0z" />
                </svg>
            </footer>
        </div>
    );
}
